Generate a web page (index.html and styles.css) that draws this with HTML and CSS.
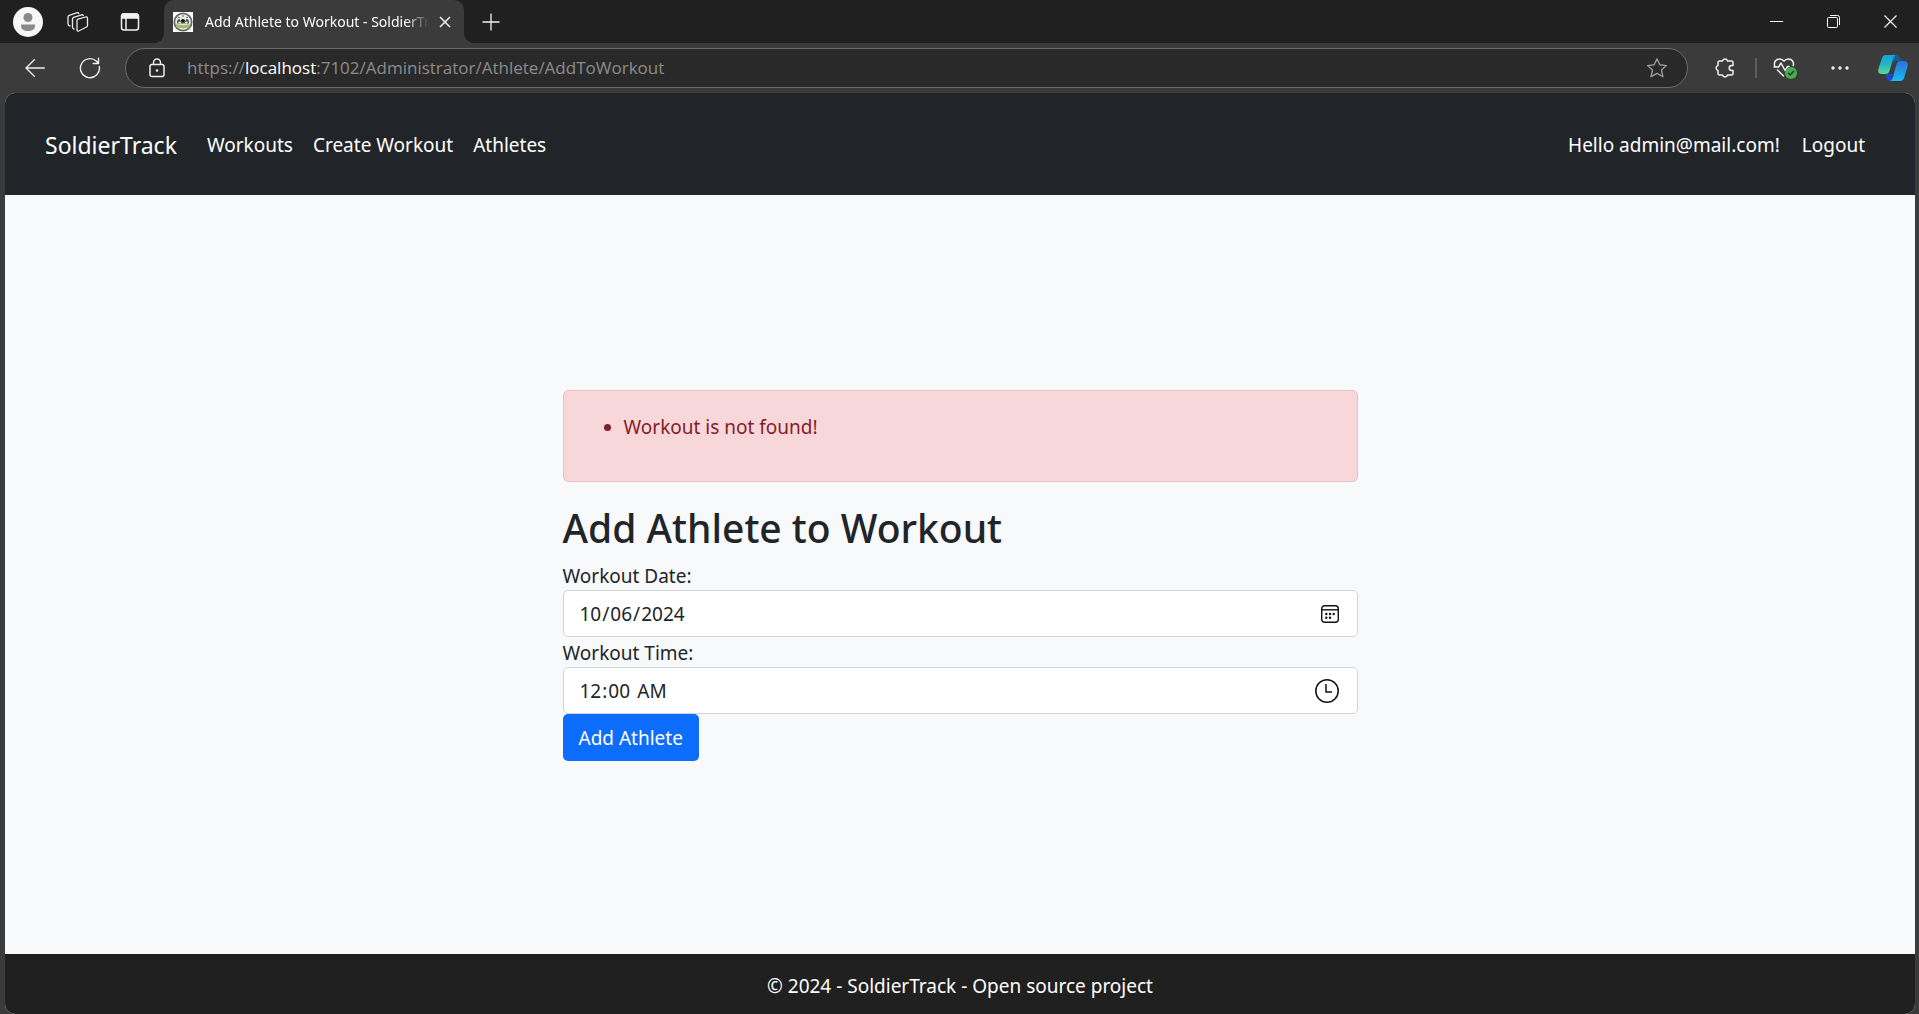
FILE: index.html
```html
<!DOCTYPE html>
<html lang="en">
<head>
<meta charset="utf-8">
<meta name="viewport" content="width=device-width, initial-scale=1">
<title>Add Athlete to Workout - SoldierTrack</title>
<link rel="stylesheet" href="styles.css">
</head>
<body>
<div class="browser">
  <div class="tabbar">
    <button class="tool tool-profile" aria-label="Profile">
      <svg width="30" height="30" viewBox="0 0 30 30"><circle cx="15" cy="15" r="15" fill="#f7f7f7"/><circle cx="15" cy="10.500" r="4.500" fill="#8a8a8a"/><path d="M8 17.500h14v1.500c0 3.500-3 5-7 5s-7-1.500-7-5z" fill="#8a8a8a"/></svg>
    </button>
    <button class="tool tool-spaces" aria-label="Workspaces">
      <svg width="22" height="22" viewBox="0 0 22 22" fill="none" stroke="#e8e8e8" stroke-width="1.300" stroke-linejoin="round" stroke-linecap="round"><path d="M10 9.500q0-1 1-1.300l7.500-2.200q2-.5 2 1.200v7.300q0 1-1 1.500l-7.800 4q-1.700.6-1.700-1.200z"/><path d="M7 18q-1.500-.3-1.500-2V8q0-1.300 1.200-1.700l7.800-2.500q1.300-.3 1.800.7"/><path d="M3 15q-2-.3-2-2.200V6q0-1.300 1.200-1.700l8-2.600q1.300-.3 1.600.8"/></svg>
    </button>
    <button class="tool tool-panes" aria-label="Tab actions">
      <svg width="20" height="20" viewBox="0 0 20 20" fill="none" stroke="#f2f2f2" stroke-width="1.500"><rect x="1.500" y="2" width="17" height="16" rx="2.500"/><path d="M2 3.500q0-1.500 1.500-1.500h13q1.500 0 1.500 1.500V6H2z" fill="#f2f2f2"/><path d="M6 6v12"/></svg>
    </button>
    <div class="tab">
      <svg class="favicon" width="20" height="20" viewBox="0 0 20 20"><rect width="20" height="20" fill="#fff"/><circle cx="10" cy="10" r="8.700" fill="#e9eae6" stroke="#666b68" stroke-width="1.800"/><path d="M4 10q.5-3 2.500-3l1 2 1-1.500h3l1 1.500 1-2q2 0 2.500 3v1.500H4z" fill="#4a4f49"/><path d="M5 5l2 1M15 5l-2 1M10 3v2" stroke="#6d726e"/><circle cx="10" cy="8.500" r="1.500" fill="#111"/><path d="M5.500 10.500h2.500M12 10.500h2.500" stroke="#fff" stroke-width="1.500"/><path d="M2.500 12q7.500 2 15 0l-1 3.500q-6.500 1.500-13 0z" fill="#a9b86b"/></svg>
      <span class="tab-title">Add Athlete to Workout - SoldierTrack</span>
      <button class="tool tab-close" aria-label="Close tab">
        <svg width="12" height="12" viewBox="0 0 12 12" stroke="#f2f2f2" stroke-width="1.500"><path d="M1 1l10 10M11 1L1 11"/></svg>
      </button>
    </div>
    <button class="tool tool-new" aria-label="New tab">
      <svg width="18" height="18" viewBox="0 0 18 18" stroke="#f2f2f2" stroke-width="1.300"><path d="M9 .5v17M.5 9h17"/></svg>
    </button>
    <div class="window-buttons">
      <button class="tool window-button" aria-label="Minimize"><svg width="13" height="13" viewBox="0 0 13 13"><path d="M0 6.500h13" stroke="#fff"/></svg></button>
      <button class="tool window-button" aria-label="Restore"><svg width="13" height="13" viewBox="0 0 13 13" fill="none" stroke="#fff"><rect x=".5" y="2.500" width="10" height="10" rx="1.200"/><path d="M3 .5h7.500q2 0 2 2V10"/></svg></button>
      <button class="tool window-button" aria-label="Close"><svg width="13" height="13" viewBox="0 0 13 13" stroke="#fff" stroke-width="1.100"><path d="M.5.5l12 12M12.500.5l-12 12"/></svg></button>
    </div>
  </div>

  <div class="toolbar">
    <button class="tool tool-nav" aria-label="Back">
      <svg width="20" height="18" viewBox="0 0 20 18" fill="none" stroke="#f0f0f0" stroke-width="1.400" stroke-linecap="round" stroke-linejoin="round"><path d="M19.300 9H1M9.300.8L1 9l8.300 8.200"/></svg>
    </button>
    <button class="tool tool-nav" aria-label="Refresh">
      <svg width="22" height="22" viewBox="0 0 22 22" fill="none" stroke="#f0f0f0" stroke-width="1.400" stroke-linecap="round" stroke-linejoin="round"><path d="M20.300 9.500a9.500 9.500 0 1 1-2.800-5.200L19 6M19.500 1.300V6.500h-5.300"/></svg>
    </button>
    <div class="address">
      <svg width="16" height="20" viewBox="0 0 16 20" fill="none" stroke="#eee" stroke-width="1.500"><rect x="1" y="6.500" width="14" height="12" rx="2"/><path d="M4.500 6.500V4.500a3.500 3.500 0 0 1 7 0v2"/><circle cx="8" cy="12.500" r="1.300" fill="#eee" stroke="none"/></svg>
      <div class="url" role="textbox" aria-label="Address">https://<span class="url-host">localhost</span>:7102/Administrator/Athlete/AddToWorkout</div>
      <button class="tool" aria-label="Add to favorites">
        <svg width="22" height="22" viewBox="0 0 22 22" fill="none" stroke="#9a9a9a" stroke-width="1.400" stroke-linejoin="round"><path d="M11 1.800l2.800 6 6.600.8-4.900 4.500 1.400 6.600-5.900-3.300-5.900 3.300 1.400-6.600L1.600 8.600l6.600-.8z"/></svg>
      </button>
    </div>
    <button class="tool tool-side tool-extensions" aria-label="Extensions">
      <svg width="20" height="22" viewBox="0 0 20 22" fill="none" stroke="#f0f0f0" stroke-width="1.500" stroke-linejoin="round"><path d="M4.500 4h3a2.600 2.600 0 0 1 5 0h4q1.500 0 1.500 1.500v3h-1.300a2.300 2.300 0 0 0 0 5H18v3q0 1.500-1.500 1.500h-4a2.600 2.600 0 0 1-5 0h-3Q3 18 3 16.500v-3a2.600 2.600 0 0 1 0-5v-3Q3 4 4.500 4z"/></svg>
    </button>
    <span class="separator"></span>
    <button class="tool tool-side" aria-label="Browser essentials">
      <svg class="essentials" width="24" height="22" viewBox="0 0 24 22" fill="none" stroke="#f0f0f0" stroke-width="1.500" stroke-linejoin="round" stroke-linecap="round"><path d="M1.700 9C.5 5 3 2 6.500 2q3 0 4.500 2.200Q12.500 2 15.500 2C19 2 21.200 5 20.300 8.500M1 10h4.500L8 6l4 7.500 2.500-4H16M4.500 13l6 6"/><circle cx="18" cy="16" r="6" fill="#4cad50" stroke="none"/><path d="M15.500 16.300l1.700 1.600 3.400-3.700" stroke="#163f1a"/></svg>
    </button>
    <button class="tool tool-side" aria-label="Settings and more">
      <svg width="18" height="4" viewBox="0 0 18 4" fill="#f0f0f0"><circle cx="2" cy="2" r="1.700"/><circle cx="9" cy="2" r="1.700"/><circle cx="16" cy="2" r="1.700"/></svg>
    </button>
    <button class="tool tool-copilot" aria-label="Copilot">
      <svg width="30" height="28" viewBox="0 0 30 28">
        <defs>
          <linearGradient id="wingLeft" x1="0" y1="0" x2="0" y2="1"><stop offset="0" stop-color="#189fdc"/><stop offset=".5" stop-color="#27b6c7"/><stop offset="1" stop-color="#62d88c"/></linearGradient>
          <linearGradient id="wingRight" x1="0" y1="0" x2="0" y2="1"><stop offset="0" stop-color="#2c70dc"/><stop offset="1" stop-color="#19bdf5"/></linearGradient>
        </defs>
        <path d="M14 1h4q3 0 4 3l1 3h-4q-3 0-4 3z" fill="#0a5f96"/>
        <path d="M7 20h8l-2 7q-3 .5-4-2.500z" fill="#1a48d2"/>
        <path d="M8 1h10q-2 1-3 4l-3.500 12q-1 3-4 3H4q-5 0-3.500-5.500L4 4q1-3 4-3z" fill="url(#wingLeft)"/>
        <path d="M22 7h4q5 0 3.500 5.500L26 24q-1 3-4 3H12q2-1 3-4l3.500-13q1-3 3.500-3z" fill="url(#wingRight)"/>
      </svg>
    </button>
  </div>

  <div class="page">
    <header class="site-header">
      <a class="brand" href="#">SoldierTrack</a>
      <nav class="site-nav">
        <a class="nav-link" href="#">Workouts</a>
        <a class="nav-link" href="#">Create Workout</a>
        <a class="nav-link" href="#">Athletes</a>
      </nav>
      <div class="account">
        <span>Hello admin@mail.com!</span>
        <button class="logout" type="button">Logout</button>
      </div>
    </header>

    <main class="content">
      <div class="panel">
        <div class="alert" role="alert">
          <ul class="alert-list"><li>Workout is not found!</li></ul>
        </div>
        <h1 class="title">Add Athlete to Workout</h1>
        <form class="form">
          <label class="label" for="workout-date">Workout Date:</label>
          <div class="field">
            <input class="input" id="workout-date" type="date" value="2024-10-06">
            <svg class="field-icon" width="18" height="18" viewBox="0 0 18 18" fill="none" stroke="#111" stroke-width="1.400"><rect x=".7" y=".7" width="16.600" height="16.600" rx="3"/><path d="M1 4.800h16"/><g fill="#111" stroke="none"><circle cx="5.300" cy="9" r="1.200"/><circle cx="9" cy="9" r="1.200"/><circle cx="12.700" cy="9" r="1.200"/><circle cx="5.300" cy="12.700" r="1.200"/><circle cx="9" cy="12.700" r="1.200"/></g></svg>
          </div>
          <label class="label" for="workout-time">Workout Time:</label>
          <div class="field">
            <input class="input" id="workout-time" type="time" value="00:00">
            <svg class="field-icon" width="24" height="24" viewBox="0 0 24 24" fill="none" stroke="#111" stroke-width="1.500"><circle cx="12" cy="12" r="11.200"/><path d="M11 5v8h6"/></svg>
          </div>
          <button class="submit" type="submit">Add Athlete</button>
        </form>
      </div>
    </main>

    <footer class="site-footer">© 2024 - SoldierTrack - Open source project</footer>
  </div>
</div>
</body>
</html>
```
FILE: styles.css
```css
* {
  box-sizing: border-box;
}

body {
  margin: 0;
  background: #3b3b3b;
  color: #212529;
  font-family: "Noto Sans", "Open Sans", sans-serif;
  font-size: 19px;
  line-height: 30px;
}

button,
input {
  font: inherit;
  color: inherit;
}

a {
  color: inherit;
  text-decoration: none;
}

svg {
  display: block;
  flex: none;
}

/* Browser frame */
.browser {
  display: flex;
  flex-direction: column;
  min-height: 100vh;
}

.tool {
  display: flex;
  align-items: center;
  justify-content: center;
  flex: none;
  padding: 0;
  border: 0;
  background: none;
}

.tabbar {
  display: flex;
  height: 43px;
  background: #202020;
}

.tool-profile {
  width: 56px;
}

.tool-spaces {
  width: 44px;
}

.tool-panes {
  width: 60px;
}

.tab {
  position: relative;
  display: flex;
  align-items: center;
  width: 300px;
  margin-left: 4px;
  padding: 0 7px 0 9px;
  border-radius: 10px 10px 0 0;
  background: #3b3b3b;
}

.tab::before,
.tab::after {
  content: "";
  position: absolute;
  bottom: 0;
  width: 10px;
  height: 10px;
}

.tab::before {
  right: 100%;
  background: radial-gradient(circle at 0 0, #202020 10px, #3b3b3b 10px);
}

.tab::after {
  left: 100%;
  background: radial-gradient(circle at 100% 0, #202020 10px, #3b3b3b 10px);
}

.tab-title {
  flex: 1;
  margin-left: 12px;
  overflow: hidden;
  color: #fff;
  font-size: 14px;
  white-space: nowrap;
  mask-image: linear-gradient(to left, transparent, #000 24px);
}

.tab-close {
  width: 24px;
  height: 24px;
  margin-left: 4px;
}

.tool-new {
  width: 54px;
}

.window-buttons {
  display: flex;
  margin-left: auto;
}

.window-button {
  width: 57px;
}

.toolbar {
  display: flex;
  align-items: center;
  height: 50px;
  padding-left: 7px;
}

.tool-nav {
  width: 55px;
}

.address {
  display: flex;
  flex: 1;
  align-items: center;
  height: 40px;
  margin-left: 8px;
  padding: 0 19px 0 23px;
  border: 1px solid #6b6b6b;
  border-radius: 20px;
  background: #292929;
}

.url {
  flex: 1;
  margin-left: 22px;
  color: #8c8c8c;
  font-family: "Open Sans", "Noto Sans", sans-serif;
  font-size: 17px;
}

.url-host {
  color: #fff;
}

.tool-side {
  width: 55px;
}

.tool-extensions {
  margin-left: 9px;
}

.separator {
  width: 2px;
  height: 20px;
  margin-left: 3px;
  background: #5c5c5c;
}

.tool-copilot {
  width: 52px;
}

/* Site */
.page {
  display: flex;
  flex: 1;
  flex-direction: column;
  margin: 0 4px 0 5px;
  border-radius: 10px;
  background: #f8f9fa;
  overflow: hidden;
}

.site-header {
  display: flex;
  align-items: center;
  padding: 27px 50px 25px 40px;
  background: #212529;
  color: #fff;
}

.brand {
  margin-right: 20px;
  font-size: 23px;
  line-height: 50px;
}

.site-nav {
  display: flex;
}

.nav-link {
  padding: 10px;
}

.account {
  display: flex;
  gap: 22px;
  margin-left: auto;
}

.logout {
  padding: 0;
  border: 0;
  background: none;
}

.content {
  display: flex;
  flex: 1;
  align-items: center;
  justify-content: center;
  padding-top: 2px;
}

.panel {
  width: 795px;
  max-width: 100%;
}

.alert {
  margin-bottom: 20px;
  padding: 21px 20px 19px;
  border: 1px solid #f1c0c5;
  border-radius: 5px;
  background: #f8d7da;
  color: #842029;
}

.alert-list {
  margin: 0 0 20px;
  padding-left: 40px;
}

.title {
  margin: 0 0 10px;
  padding-top: 4px;
  font-size: 39px;
  font-weight: 500;
  line-height: 44px;
}

.label {
  display: block;
  padding-top: 2px;
  line-height: 28px;
}

.field {
  position: relative;
}

.input {
  display: block;
  width: 100%;
  height: 47px;
  padding: 1px 15px 0;
  border: 1px solid #ced4da;
  border-radius: 5px;
  background: #fff;
}

.input::-webkit-datetime-edit,
.input::-webkit-datetime-edit-fields-wrapper {
  padding: 0;
}

.input::-webkit-datetime-edit-ampm-field {
  padding-left: 3px;
}

.input::-webkit-calendar-picker-indicator {
  opacity: 0;
}

.field-icon {
  position: absolute;
  top: 0;
  right: 19px;
  bottom: 0;
  margin: auto 0;
  pointer-events: none;
}

.submit {
  height: 47px;
  padding: 1px 16px 0;
  border: 0;
  border-radius: 5px;
  background: #0d6efd;
  color: #fff;
}

.site-footer {
  padding: 17px 15px 13px;
  background: #202020;
  color: #fff;
  text-align: center;
}
```
